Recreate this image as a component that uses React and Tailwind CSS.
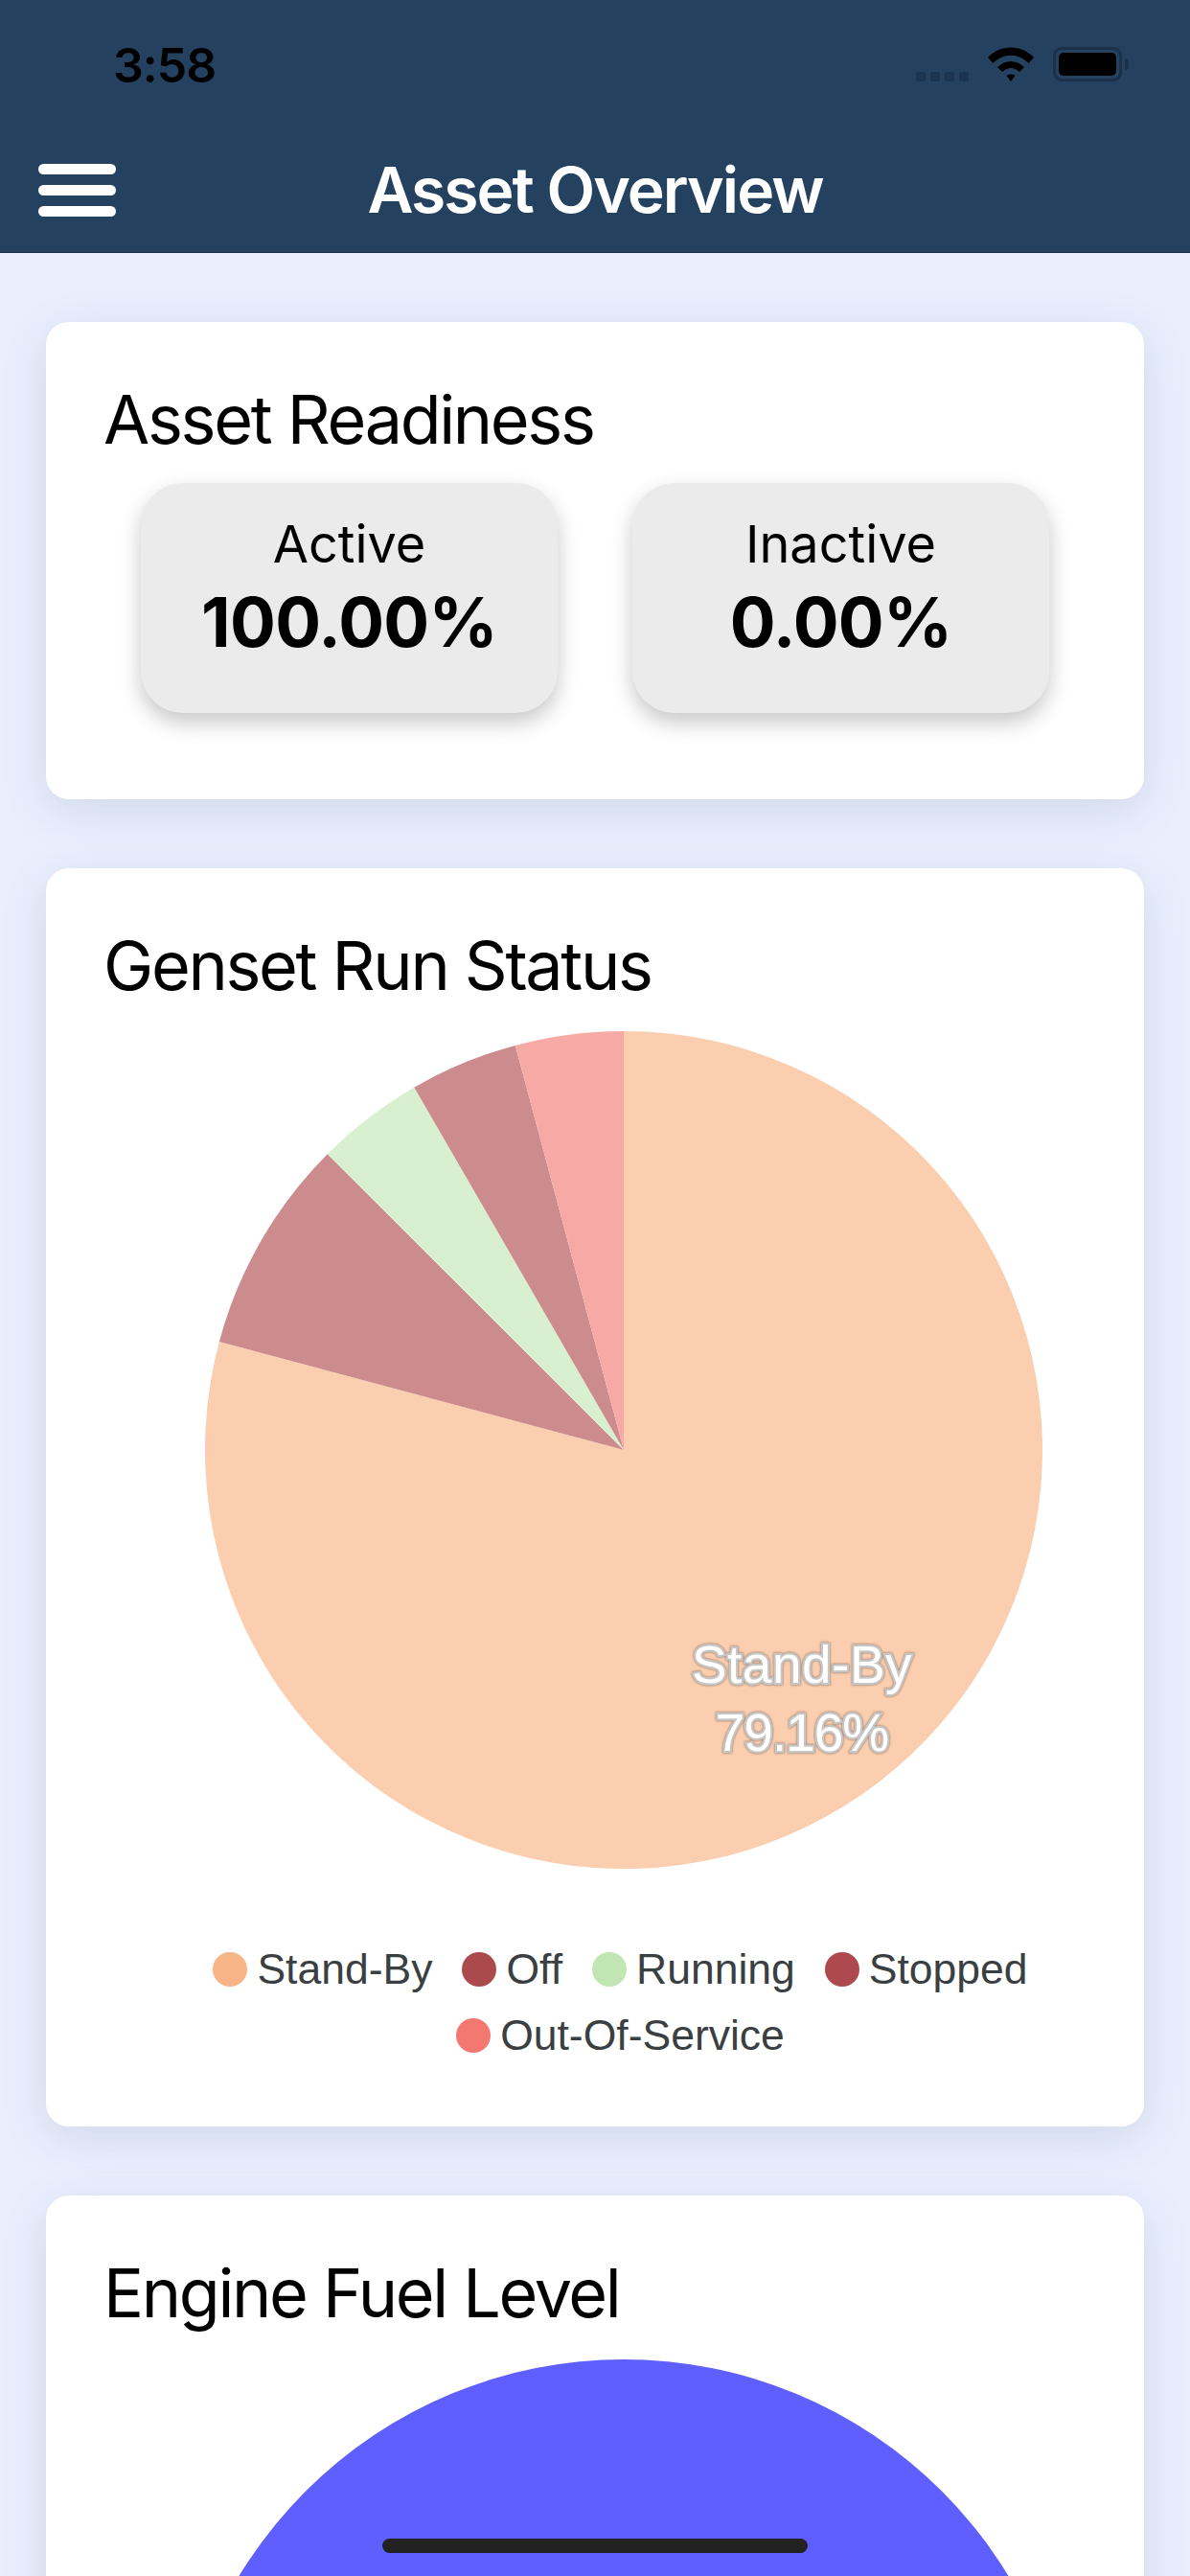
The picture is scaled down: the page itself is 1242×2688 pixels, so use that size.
const sf = "font-['Inter','Liberation_Sans',sans-serif]"

const runStatus = [
  { pct: 79.16, fill: '#FACEAF' },
  { pct: 8.33, fill: '#CC8B8C' },
  { pct: 4.17, fill: '#D8EFD0' },
  { pct: 4.17, fill: '#CC8B8C' },
  { pct: 4.17, fill: '#F7A9A5' },
]

const legend = [
  { label: 'Stand-By', color: 'bg-[#F7B587]' },
  { label: 'Off', color: 'bg-[#AB4A4C]' },
  { label: 'Running', color: 'bg-[#C1E6B3]' },
  { label: 'Stopped', color: 'bg-[#AE4A4F]' },
  { label: 'Out-Of-Service', color: 'bg-[#F37872]' },
]

function Pie({ slices, r = 437, children }) {
  let total = 0
  const point = (pct) => {
    const a = (pct / 100) * 2 * Math.PI
    return `${r + r * Math.sin(a)} ${r - r * Math.cos(a)}`
  }
  return (
    <svg width={r * 2} height={r * 2} viewBox={`0 0 ${r * 2} ${r * 2}`} className="block shrink-0">
      {slices.map((s, i) => {
        const start = total
        total += s.pct
        const large = s.pct > 50 ? 1 : 0
        return <path key={i} d={`M${r} ${r}L${point(start)}A${r} ${r} 0 ${large} 1 ${point(total)}Z`} fill={s.fill} />
      })}
      {children}
    </svg>
  )
}

function StatTile({ label, value }) {
  return (
    <div className="w-[435px] h-[240px] rounded-[44px] bg-[#EBEBEB] shadow-[0_10px_22px_rgba(0,0,0,0.22)] flex flex-col items-center pt-[30px]">
      <span className="text-[54px] leading-[68px] text-black">{label}</span>
      <span className="text-[71px] leading-[86px] font-bold tracking-[-0.01em] text-black mt-[4px]">{value}</span>
    </div>
  )
}

function Card({ title, className, children }) {
  return (
    <section className={`bg-white rounded-[24px] shadow-[0_12px_50px_rgba(40,50,90,0.12)] mt-[72px] pt-[58px] ${className}`}>
      <h2 className="text-[70px] leading-[88px] tracking-[-0.033em] text-black pl-[60px]">{title}</h2>
      {children}
    </section>
  )
}

export default function App() {
  return (
    <div className={`relative w-[1242px] h-[2688px] overflow-hidden bg-[#E9EFFD] ${sf}`}>
      <header className="h-[264px] bg-[#254160] border-b border-[#1b3049] flex flex-col">
        <div className="h-[136px] pt-[38px] pl-[118px] pr-[71px] flex items-start justify-between">
          <span className="text-[50px] leading-[60px] font-semibold tracking-[-0.02em] text-black">3:58</span>
          <div className="flex items-start pt-[11px]">
            <div className="flex gap-[5px] mt-[26px] mr-[20px]">
              <i className="block w-[10px] h-[10px] rounded-[3px] bg-[#1B3550]" />
              <i className="block w-[10px] h-[10px] rounded-[3px] bg-[#1B3550]" />
              <i className="block w-[10px] h-[10px] rounded-[3px] bg-[#1B3550]" />
              <i className="block w-[10px] h-[10px] rounded-[3px] bg-[#1B3550]" />
            </div>
            <svg width="48" height="36" viewBox="0 0 48 36" className="mr-[20px]">
              <path d="M0 11C13-3 35-3 48 11L42.500 17C32 6 16 6 5.500 17Z" />
              <path d="M10 21C18 13 30 13 38 21L33 26C27 20.500 21 20.500 15 26Z" />
              <path d="M19.500 30C22 28 26 28 28.500 30L24 36Z" />
            </svg>
            <div className="relative w-[72px] h-[36px] rounded-[9px] border-[3px] border-[#1B3049] p-[3px]">
              <div className="w-full h-full rounded-[5px] bg-black" />
              <div className="absolute right-[-10px] top-[9px] w-[4px] h-[12px] rounded-r-[4px] bg-[#1B3049]" />
            </div>
          </div>
        </div>
        <div className="relative flex-1 flex items-start justify-center">
          <div className="absolute left-[40px] top-[35px] flex flex-col gap-[11px]">
            <i className="block w-[81px] h-[11px] rounded-full bg-white" />
            <i className="block w-[81px] h-[11px] rounded-full bg-white" />
            <i className="block w-[81px] h-[11px] rounded-full bg-white" />
          </div>
          <h1 className="text-[66px] leading-[80px] font-semibold tracking-[-0.03em] text-white mt-[22px]">Asset Overview</h1>
        </div>
      </header>

      <main className="px-[48px]">
        <Card title="Asset Readiness" className="h-[498px]">
          <div className="flex justify-center gap-[78px] mt-[22px]">
            <StatTile label="Active" value="100.00%" />
            <StatTile label="Inactive" value="0.00%" />
          </div>
        </Card>

        <Card title="Genset Run Status" className="h-[1313px]">
          <div className="flex justify-center pl-[60px] mt-[24px]">
            <Pie slices={runStatus}>
              <text
                textAnchor="middle"
                className="font-['Liberation_Sans',sans-serif] text-[55px] [paint-order:stroke] [filter:drop-shadow(0_0_1px_rgba(120,90,70,0.9))]"
                fill="#fff"
                stroke="#C8C6C4"
                strokeWidth="4.500"
              >
                <tspan x="623" y="680" letterSpacing="0.5">Stand-By</tspan>
                <tspan x="623" y="751" letterSpacing="-1">79.16%</tspan>
              </text>
            </Pie>
          </div>
          <ul className="flex flex-wrap justify-center gap-x-[31px] pl-[53px] mt-[70px] font-['Liberation_Sans',sans-serif] text-[44.500px] leading-[69px] text-[#3A4042]">
            {legend.map((item) => (
              <li key={item.label} className="flex items-center gap-[10px]">
                <span className={`w-[36px] h-[36px] rounded-full ${item.color}`} />
                {item.label}
              </li>
            ))}
          </ul>
        </Card>

        <Card title="Engine Fuel Level" className="h-[1400px]">
          <div className="flex justify-center pl-[60px] mt-[25px]">
            <Pie r={470} slices={[{ pct: 50, fill: '#5F5FFF' }, { pct: 50, fill: '#5F5FFF' }]} />
          </div>
        </Card>
      </main>

      <div className="absolute left-[399px] top-[2649px] w-[444px] h-[15px] rounded-[8px] bg-[#222222]" />
    </div>
  )
}
